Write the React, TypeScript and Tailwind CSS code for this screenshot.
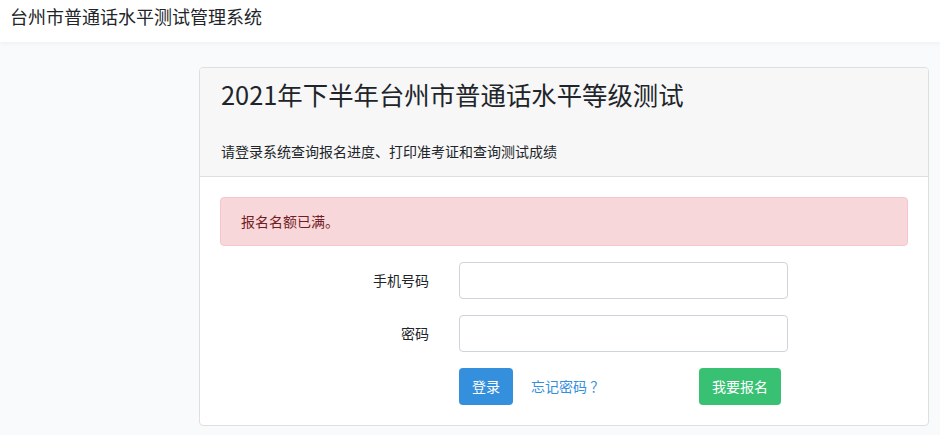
const FONT = '"Noto Sans CJK SC", "Noto Sans", sans-serif';

function Field({ label, type }: { label: string; type: string }) {
  return (
    <div className="flex items-center mb-4">
      <label className="w-[224px] pr-[15px] text-right text-[14px] leading-[23px] text-[#212529]">{label}</label>
      <input
        type={type}
        className="w-[329px] h-[37px] ml-[15px] rounded-[4px] border border-[#ced4da] bg-white px-3 outline-none"
      />
    </div>
  );
}

export default function App() {
  return (
    <div className="min-h-[435px] bg-[#f8fafc] text-[#212529]" style={{ fontFamily: FONT }}>
      <header className="h-[42px] bg-white shadow-[0_2px_4px_rgba(0,0,0,0.04)] px-[10px] pt-[5px]">
        <span className="text-[18px] leading-[22px] text-[#212529]">台州市普通话水平测试管理系统</span>
      </header>

      <main className="pt-[25px] pl-[199px]">
        <div className="w-[730px] rounded-[4px] border border-[#dfdfdf] bg-white overflow-hidden">
          <div className="bg-[#f7f7f7] border-b border-[#dfdfdf] px-[21px] pt-[12px] pb-[13px]">
            <h3 className="text-[25.4px] leading-[29px] text-[#212529]">2021年下半年台州市普通话水平等级测试</h3>
            <p className="mt-[31px] text-[14px] leading-[23px] text-[#212529]">请登录系统查询报名进度、打印准考证和查询测试成绩</p>
          </div>

          <div className="px-[20px] pt-[20px] pb-[20px]">
            <div className="h-[49px] mb-4 rounded-[4px] border border-[#f5c6cb] bg-[#f8d7da] px-[20px] flex items-center text-[14px] text-[#721c24]">
              报名名额已满。
            </div>

            <Field label="手机号码" type="text" />
            <Field label="密码" type="password" />

            <div className="flex items-center pl-[239px] w-[561px]">
              <button className="h-[37px] px-[13px] rounded-[4px] bg-[#3490dc] text-white text-[14px]">登录</button>
              <a className="ml-[18px] text-[14px] text-[#3490dc] cursor-pointer">忘记密码 ？</a>
              <button className="ml-auto h-[37px] px-[13px] rounded-[4px] bg-[#38c172] text-white text-[14px]">我要报名</button>
            </div>
          </div>
        </div>
      </main>
    </div>
  );
}
